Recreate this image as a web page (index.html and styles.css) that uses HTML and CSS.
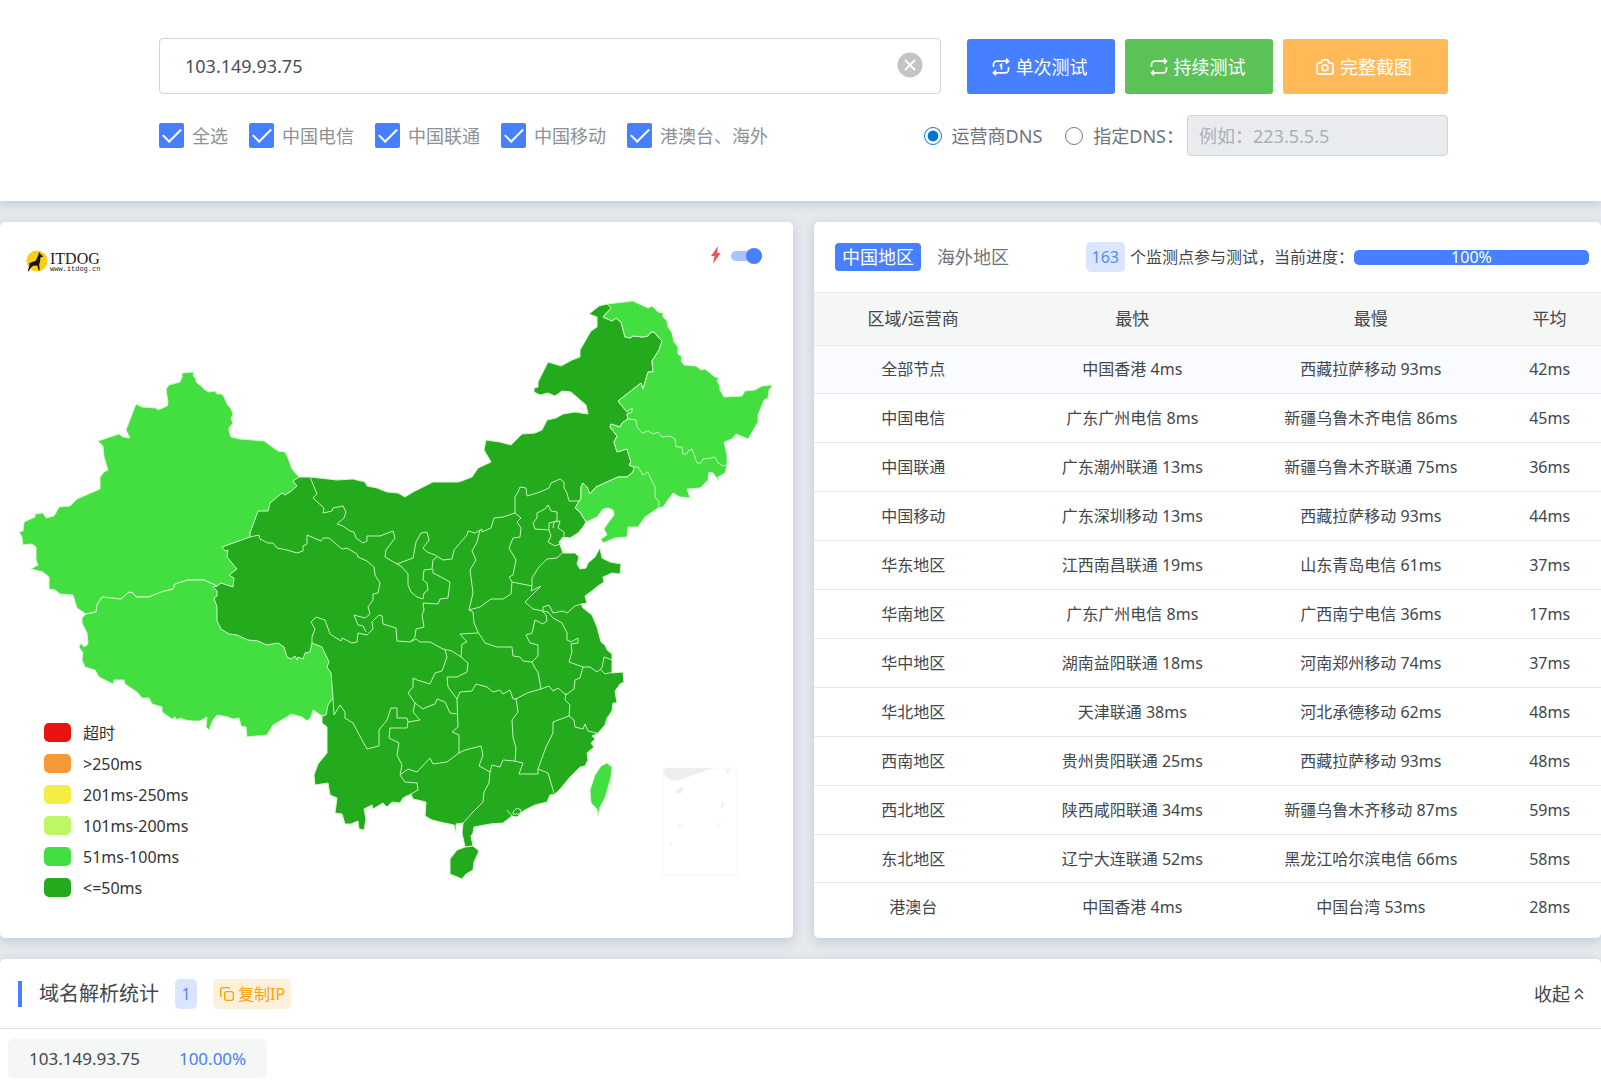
FILE: index.html
```html
<!DOCTYPE html>
<html lang="zh-CN">
<head>
<meta charset="utf-8">
<title>ITDOG</title>
<link rel="stylesheet" href="styles.css">
</head>
<body>
<header class="panel">
  <form>
    <div class="search-row">
      <div class="host-box">
        <input class="host-input" type="text" value="103.149.93.75" aria-label="域名或IP">
        <button class="clear" type="button" aria-label="清空"><svg viewBox="0 0 26 26"><circle cx="13" cy="13" r="12.5" fill="#c4c4c4"/><path d="M8 8l10 10M18 8L8 18" stroke="#fff" stroke-width="1.8"/></svg></button>
      </div>
      <div class="actions">
        <button class="btn btn-blue" type="button"><svg class="icon" viewBox="0 0 24 24"><path d="M3 12V9a4 4 0 0 1 4-4h14M18 2l3 3-3 3M21 12v3a4 4 0 0 1-4 4H3M6 22l-3-3 3-3M10.500 10.500l2-1.500v6"/></svg>单次测试</button>
        <button class="btn btn-green" type="button"><svg class="icon" viewBox="0 0 24 24"><path d="M3 12V9a4 4 0 0 1 4-4h14M18 2l3 3-3 3M21 12v3a4 4 0 0 1-4 4H3M6 22l-3-3 3-3"/></svg>持续测试</button>
        <button class="btn btn-orange" type="button"><svg class="icon" viewBox="0 0 24 24"><path d="M5 7h1a2 2 0 0 0 2-2 1.500 1.500 0 0 1 1.500-1.500h5A1.500 1.500 0 0 1 16 5a2 2 0 0 0 2 2h1a2.500 2.500 0 0 1 2.500 2.500V18a2.500 2.500 0 0 1-2.500 2.500H5A2.500 2.500 0 0 1 2.500 18V9.500A2.500 2.500 0 0 1 5 7z"/><circle cx="12" cy="13" r="3.500"/></svg>完整截图</button>
      </div>
    </div>
    <div class="option-row">
      <div class="lines">
        <label class="tick"><input type="checkbox" checked>全选</label>
        <label class="tick"><input type="checkbox" checked>中国电信</label>
        <label class="tick"><input type="checkbox" checked>中国联通</label>
        <label class="tick"><input type="checkbox" checked>中国移动</label>
        <label class="tick"><input type="checkbox" checked>港澳台、海外</label>
      </div>
      <div class="dns">
        <label class="dns-choice"><input type="radio" name="dns" checked>运营商DNS</label>
        <label class="dns-choice"><input type="radio" name="dns">指定DNS：</label>
        <input class="dns-input" type="text" placeholder="例如：223.5.5.5" aria-label="DNS" disabled>
      </div>
    </div>
  </form>
</header>

<main class="columns">
  <section class="card map-card">
    <svg class="map" viewBox="0 222 793 716" role="img" aria-label="中国地图">
      <g class="land">
        <path class="fast" d="M299 477L310 477 337 480 353 479 365 482 367 486 377 488 387 492 398 493 405 497 413 492 433 482 459 482 472 477 478 468 491 462 484 450 486 440 500 442 511 445 522 434 535 433 542 430 547 420 556 418 563 414 575 412 588 414 586 405 579 399 571 392 562 391 555 396 548 393 540 395 534 392 534 388 538 387 538 382 548 362 561 366 572 360 580 357 580 350 591 331 597 327 597 317 589 314 599 306 607 304 611 308 603 317 612 321 616 318 621 322 625 337 630 338 633 336 643 337 648 336 651 332 654 332 662 341 659 350 652 361 653 372 648 372 643 389 641 383 618 401 627 412 632 408 632 412 627 414 628 419 622 423 620 427 611 424 610 427 617 436 614 442 617 452 627 449 631 462 629 465 634 467 633 472 627 477 618 477 607 482 596 487 590 494 587 487 583 483 581 487 581 498 575 508 580 512 583 517 586 522 583 527 578 533 570 538 563 537 559 542 563 553 575 553 579 557 577 564 580 569 586 568 588 563 595 557 600 548 602 558 610 562 621 564 620 574 612 573 603 577 604 582 598 586 593 590 585 596 587 603 581 604 583 608 592 615 597 627 601 642 605 645 607 650 612 654 612 673 623 672 624 682 620 684 615 691 617 703 613 703 612 711 607 718 605 725 598 733 592 736 595 739 591 743 594 747 587 753 588 760 585 766 580 767 570 777 561 788 555 794 550 795 547 802 535 805 523 811 517 817 512 816 503 823 490 824 474 827 473 833 471 836 473 846 465 847 462 833 463 823 456 824 456 833 454 825 440 822 432 820 425 816 426 802 413 799 411 794 403 798 400 803 392 802 387 807 383 803 373 809 372 805 364 809 366 819 364 830 359 829 358 821 351 824 345 824 342 814 335 813 337 798 330 795 328 783 315 785 314 775 318 764 327 753 327 727 322 723 322 715 310 695 270 685 205 645 198 595 215 565 205 545 235 530 245 500 280 480z"/>
        <path class="good" d="M182 373L194 372 193 376 196 379 196 382 201 386 205 390 209 392 215 391 217 394 222 394 224 397 227 404 231 409 233 414 231 419 233 423 229 428 229 431 231 437 240 439 264 441 278 451 285 452 288 458 292 469 299 477 293 481 297 486 290 492 285 495 282 493 270 503 268 511 258 511 250 533 250 537 222 547 225 551 228 550 227 557 237 569 229 575 234 578 233 587 221 583 217 586 204 580 188 580 175 584 173 589 161 592 149 597 136 597 133 593 129 592 121 599 102 597 97 605 96 612 86 614 77 608 73 595 60 594 55 590 49 589 49 577 43 572 31 569 38 565 36 560 36 547 32 544 23 545 22 537 19 532 23 531 24 522 35 517 35 514 43 513 46 518 54 516 59 507 70 506 77 499 100 489 100 477 104 472 108 470 104 457 103 446 98 441 119 434 123 437 130 438 126 430 136 404 142 407 156 408 158 410 167 406 168 403 166 389 169 385 180 382 182 377z"/>
        <path class="good" d="M86 614L96 612 97 605 102 597 121 599 129 592 133 593 136 597 149 597 161 592 173 589 175 584 188 580 204 580 217 586 213 587 217 591 217 596 214 598 217 607 217 621 221 629 229 634 237 635 248 640 258 641 267 645 278 643 284 647 287 657 291 659 295 656 297 660 298 657 303 659 305 653 310 652 312 643 322 647 329 662 327 667 331 673 333 698 328 705 326 715 322 716 313 710 311 717 307 721 302 717 291 714 287 717 273 725 267 735 247 737 246 727 241 726 239 718 233 719 228 717 217 715 213 720 209 730 206 727 207 717 200 721 193 721 185 720 180 718 177 720 175 717 172 719 162 712 162 707 152 704 149 698 142 698 137 692 125 684 124 680 114 680 113 684 99 677 95 670 85 667 82 660 83 653 79 647 81 643 84 647 88 644 87 633 82 623 82 618z"/>
        <path class="good" d="M607 304L633 301 648 308 652 306 658 312 663 313 663 317 667 321 668 327 672 333 674 342 678 347 678 354 682 357 681 361 684 365 696 366 701 370 705 369 715 377 719 378 717 380 720 387 720 390 724 397 742 396 745 391 755 390 762 386 773 385 769 390 768 398 764 400 758 415 758 422 748 439 736 434 732 439 724 442 727 455 727 465 725 473 718 477 719 481 713 473 709 472 708 480 700 488 687 489 690 498 680 497 673 493 663 507 658 508 645 517 638 527 628 527 627 537 615 538 603 543 601 539 607 535 604 529 608 523 614 515 613 510 608 508 603 509 597 517 586 522 583 517 580 512 575 508 581 498 581 487 583 483 587 487 590 494 596 487 607 482 618 477 627 477 633 472 634 467 629 465 631 462 627 449 617 452 614 442 617 436 610 427 611 424 620 427 622 423 628 419 627 414 632 412 632 408 627 412 618 401 641 383 643 389 648 372 653 372 652 361 659 350 662 341 654 332 651 332 648 336 643 337 633 336 630 338 625 337 621 322 616 318 612 321 603 317 611 308z"/>
        <path class="fast" d="M473 846L479 851 474 862 473 870 466 874 462 879 450 874 450 859 457 850 465 847z"/>
        <path class="good" d="M607 763L612 767 611 777 605 798 600 807 598 816 597 809 591 803 590 790 595 775 601 766z"/>
      </g>
      <g class="borders">
        <path d="M628 419L636 420 637 427 642 433 648 431 653 434 658 432 662 437 670 436 675 439 676 447 682 447 683 454 687 454 688 451 692 449 697 463 701 463 703 459 711 458 715 457 718 463 723 466 727 465"/>
        <path d="M634 467L638 467 643 475 648 472 650 477 655 487 655 497 659 502 659 508"/>
        <path d="M310 477L317 494 313 498 324 508 323 513 332 511 333 508 343 506 346 512 344 518 337 524 343 526 350 531 354 532 356 538 363 543 367 541 367 536 380 536 393 531 395 538 386 550 385 557 397 564 413 558 416 542 421 533 427 532 429 540 423 548 427 552 435 555 443 560 452 559 454 550 467 535 468 531 475 533 482 529 482 532 491 528 494 518 503 517 515 513"/>
        <path d="M397 564L402 567 408 574 408 585 411 592 417 597 423 599 424 593 428 590 427 583 423 580 424 570 432 569 433 560 437 557"/>
        <path d="M433 569L433 573 441 577 450 582 448 598 440 599 438 604 423 603 424 610 422 615 424 627 416 629 415 637 410 642 397 641 396 628 383 624 382 616 379 615 372 622 373 629 367 635 358 633 357 642 352 643 342 638 341 641 330 634 325 620 316 617 311 622 315 629 312 637 312 643"/>
        <path d="M250 537L259 535 260 539 268 543 273 543 277 548 287 550 297 553 303 551 303 546 307 544 307 535 321 541 323 538 329 538 342 549 347 548 357 554 358 557 367 561 374 567 375 575 380 583 378 593 373 594 373 600 368 607 370 614 365 618 354 615 358 625 363 626 366 632"/>
        <path d="M515 513L515 497 518 492 520 487 526 488 527 496 540 492 549 488 551 483 560 479 564 482 564 488 567 493 569 501 580 501"/>
        <path d="M515 513L521 518 517 522 521 528 520 537 513 538 509 548 516 560 513 575 509 577 512 582 511 594 503 599 491 599 480 607 469 610"/>
        <path d="M480 530L477 542 472 551 476 560 470 570 473 593 469 610 473 612 474 623 478 632 485 643 497 647 512 647 513 656 520 657 523 661 532 662 538 656 538 645 530 643 526 635 532 633 535 620 543 624 547 621 546 615 542 611"/>
        <path d="M512 582L532 586 531 591 541 586 525 602 533 609 543 611 543 607 549 605 553 613 563 611 567 613 575 606 581 604"/>
        <path d="M532 586L532 578 539 567 547 559 557 558 563 552"/>
        <path d="M548 505L545 509 537 513 537 518 533 523 535 529 549 530 549 523 557 521 557 512 551 511z"/>
        <path d="M553 528L554 522 560 521 558 528 564 532 564 536M549 530L551 536 548 542 555 546 562 543"/>
        <path d="M543 611L548 612 553 618 562 623 567 633 567 640 571 642 578 638 578 643 571 644 572 652 569 662 583 667 590 667 597 672 602 668 604 657 612 660M600 669L605 674 613 672"/>
        <path d="M583 667L580 678 575 680 574 689 566 695 558 688 553 691 549 686 541 689 538 672 535 668 532 662"/>
        <path d="M541 689L527 693 516 699 513 699 510 690 503 694 500 690 493 692 487 687 476 684 472 691 460 692 457 699 448 687 447 677 457 677 467 672 468 663 461 657 462 644 467 642 460 634 478 633"/>
        <path d="M410 642L416 639 420 642 430 642 443 649 452 651 461 657M445 650L447 657 442 671 435 673 430 684 417 680 413 678 413 687 408 693 415 703 423 709 427 707 435 704 437 699 445 702 450 713 457 714"/>
        <path d="M415 703L413 712 420 720 408 722 407 728 390 728 389 738 399 743 397 755 402 765 400 775 408 769 417 772 430 758 433 764 447 762 459 753 459 735 452 732 458 727 457 699"/>
        <path d="M333 698L334 715 340 705 345 712 345 718 353 723 362 740 367 749 379 746 379 730 387 720 391 708 397 708 397 718 407 718 408 722"/>
        <path d="M400 775L405 782 417 783 418 790 411 794"/>
        <path d="M459 753L465 750 473 748 481 746 483 755 479 766 483 768 490 772 489 783 484 792 483 802 473 812 463 823"/>
        <path d="M490 772L492 765 500 767 503 760 514 761 523 763 519 774 538 774 538 769 548 773 554 793"/>
        <path d="M516 698L518 712 512 720 513 737 516 748 515 761"/>
        <path d="M538 769L546 747 553 733 553 722 569 716 570 705 565 700 566 693M569 716L574 720 575 727 583 729 585 724 588 731 597 733"/>
        <path d="M507 810L512 816M513 812L517 808 521 810 520 814 513 814z"/>
      </g>
      <g class="inset">
        <path d="M663 768H737V875H663z" fill="none" stroke="#f4f4f4"/>
        <path d="M665 768H713L677 781 670 780 663 773zM676 791l5-4 3 1-3 5-4 1zM725 769l5 0-2 5zM722 802h2l-1 6h-2zM722 820l-3 6-1-1zM678 825l5-1-4 3zM670 843l2 0 0 5zM706 849l4-5"/>
      </g>
    </svg>
    <div class="logo">
      <svg class="dog" viewBox="0 0 22 22"><circle cx="11" cy="11" r="10.500" fill="#fad011"/><path fill="#17120a" d="M13 2l1.500 2 3 2.500-3 .8-.5 4.200-.8 3 .5 6h-1l-1.400-5-4 .3-2.300 1.700L2.500 21.500l-.7-.2L3.500 15 3 13.500 6 12l3.500-1L12 6z"/></svg>
      <div><div class="logo-name">ITDOG</div><div class="logo-url">www.itdog.cn</div></div>
    </div>
    <label class="boost"><svg viewBox="0 0 10 18"><path d="M7 0L0 10h3.500L2 18 9.500 7H6z" fill="#f05252"/></svg><input type="checkbox" role="switch" checked aria-label="极速模式"></label>
    <ul class="legend">
      <li><i class="swatch timeout"></i>超时</li>
      <li><i class="swatch over250"></i>&gt;250ms</li>
      <li><i class="swatch to250"></i>201ms-250ms</li>
      <li><i class="swatch to200"></i>101ms-200ms</li>
      <li><i class="swatch to100"></i>51ms-100ms</li>
      <li><i class="swatch to50"></i>&lt;=50ms</li>
    </ul>
  </section>

  <section class="card result-card">
    <div class="result-head">
      <button class="tab active" type="button">中国地区</button>
      <button class="tab" type="button">海外地区</button>
      <span class="badge count">163</span>
      <span class="progress-label">个监测点参与测试，当前进度：</span>
      <div class="progress">100%</div>
    </div>
    <table>
      <colgroup><col class="c-area"><col class="c-fast"><col class="c-slow"><col></colgroup>
      <thead><tr><th>区域/运营商</th><th>最快</th><th>最慢</th><th>平均</th></tr></thead>
      <tbody>
        <tr class="total"><td>全部节点</td><td>中国香港 4ms</td><td>西藏拉萨移动 93ms</td><td>42ms</td></tr>
        <tr><td>中国电信</td><td>广东广州电信 8ms</td><td>新疆乌鲁木齐电信 86ms</td><td>45ms</td></tr>
        <tr><td>中国联通</td><td>广东潮州联通 13ms</td><td>新疆乌鲁木齐联通 75ms</td><td>36ms</td></tr>
        <tr><td>中国移动</td><td>广东深圳移动 13ms</td><td>西藏拉萨移动 93ms</td><td>44ms</td></tr>
        <tr><td>华东地区</td><td>江西南昌联通 19ms</td><td>山东青岛电信 61ms</td><td>37ms</td></tr>
        <tr><td>华南地区</td><td>广东广州电信 8ms</td><td>广西南宁电信 36ms</td><td>17ms</td></tr>
        <tr><td>华中地区</td><td>湖南益阳联通 18ms</td><td>河南郑州移动 74ms</td><td>37ms</td></tr>
        <tr><td>华北地区</td><td>天津联通 38ms</td><td>河北承德移动 62ms</td><td>48ms</td></tr>
        <tr><td>西南地区</td><td>贵州贵阳联通 25ms</td><td>西藏拉萨移动 93ms</td><td>48ms</td></tr>
        <tr><td>西北地区</td><td>陕西咸阳联通 34ms</td><td>新疆乌鲁木齐移动 87ms</td><td>59ms</td></tr>
        <tr><td>东北地区</td><td>辽宁大连联通 52ms</td><td>黑龙江哈尔滨电信 66ms</td><td>58ms</td></tr>
        <tr><td>港澳台</td><td>中国香港 4ms</td><td>中国台湾 53ms</td><td>28ms</td></tr>
      </tbody>
    </table>
  </section>
</main>

<section class="card stats">
  <div class="stats-head">
    <h2>域名解析统计</h2>
    <span class="badge">1</span>
    <button class="copy" type="button"><svg viewBox="0 0 24 24"><rect x="8.500" y="8.500" width="13" height="13" rx="3"/><path d="M4.500 15.500A2 2 0 0 1 2.500 13.500V5a2.500 2.500 0 0 1 2.500-2.500h8.500a2 2 0 0 1 2 2"/></svg>复制IP</button>
    <button class="fold" type="button">收起<svg viewBox="0 0 12 14"><path d="M2 6l4-4 4 4M2 12l4-4 4 4"/></svg></button>
  </div>
  <div class="stats-body">
    <div class="ip-item"><span>103.149.93.75</span><span class="share">100.00%</span></div>
  </div>
</section>
</body>
</html>
```
FILE: styles.css
```css
* { box-sizing: border-box; }

body {
  margin: 0;
  min-height: 100vh;
  display: flex;
  flex-direction: column;
  background: #e6e9ee;
  color: #42474c;
  font: 16px/24px "Noto Sans", "Noto Sans CJK SC", sans-serif;
}

button, input { font: inherit; color: inherit; }
button { border: 0; padding: 0; background: none; cursor: pointer; }

/* Test form */
.panel {
  padding: 38px 153px 45px 159px;
  background: #fff;
  box-shadow: 0 2px 10px rgba(60, 90, 100, .25);
}
.search-row { display: flex; gap: 26px; }
.host-box { position: relative; flex: 1; }
.host-input {
  display: block;
  width: 100%;
  height: 56px;
  padding: 0 60px 0 25px;
  border: 1px solid #ced4da;
  border-radius: 4px;
  font-size: 18px;
  color: #495057;
}
.clear { position: absolute; right: 18px; top: 14px; width: 26px; height: 26px; }
.clear svg { display: block; }

.actions { display: flex; gap: 10px; }
.btn {
  display: flex;
  align-items: center;
  justify-content: center;
  gap: 5px;
  width: 148px;
  height: 55px;
  margin-top: 1px;
  padding-right: 4px;
  border-radius: 3px;
  color: #fff;
  font-size: 18px;
}
.btn-blue { background: #467fff; }
.btn-green { background: #5ac256; }
.btn-orange { width: 165px; background: #ffba57; }
.icon { width: 20px; height: 20px; fill: none; stroke: currentColor; stroke-width: 2; }

.option-row {
  display: flex;
  justify-content: space-between;
  align-items: center;
  margin-top: 21px;
  font-size: 18px;
  color: #8c9196;
}
.lines, .dns { display: flex; align-items: center; }
.lines { gap: 21px; }
.tick { display: flex; align-items: center; gap: 8px; }
.tick input {
  appearance: none;
  width: 25px;
  height: 25px;
  margin: 0;
  border-radius: 2px;
  background: #467fff;
  display: grid;
  place-items: center;
}
.tick input::before {
  content: "";
  width: 16px;
  height: 8px;
  margin-top: -5px;
  border: solid #fff;
  border-width: 0 0 2px 2px;
  transform: rotate(-45deg);
}
.dns { color: #6c757d; }
.dns-choice { display: flex; align-items: center; gap: 10px; }
.dns-choice + .dns-choice { margin-left: 23px; }
.dns-choice input { width: 18px; height: 18px; margin: 0; accent-color: #0075d0; }
.dns-input {
  width: 261px;
  height: 41px;
  margin-left: 3px;
  padding: 0 11px;
  border: 1px solid #ced4da;
  border-radius: 4px;
  background: #e9ebee;
}
.dns-input::placeholder { color: #aab0b6; opacity: 1; }

/* Cards */
.card { background: #fff; border-radius: 5px; box-shadow: 0 3px 12px rgba(60, 90, 100, .22); }
.columns {
  display: grid;
  grid-template-columns: 793fr 787fr;
  gap: 21px;
  margin: 21px 0;
}

/* Map */
.map-card { display: grid; }
.map-card > * { grid-area: 1 / 1; }
.map { display: block; width: 100%; }
.land { stroke: #d4f7cd; stroke-width: 1; stroke-linejoin: round; }
.fast { fill: #24ab1d; }
.good { fill: #43df41; }
.borders { fill: none; stroke: #c4f0bd; stroke-width: 1; stroke-linejoin: round; }
.inset { fill: #eee; }
.logo {
  align-self: start;
  justify-self: start;
  display: flex;
  gap: 2px;
  margin: 28px 0 0 26px;
  color: #26221c;
}
.dog { width: 22px; height: 22px; }
.logo-name { font: 16px/17px "Liberation Serif", serif; }
.logo-url { font: 7px/5px "Liberation Mono", monospace; }
.boost {
  align-self: start;
  justify-self: end;
  display: flex;
  align-items: center;
  gap: 10px;
  margin: 24px 31px 0 0;
}
.boost svg { width: 10px; height: 18px; }
.boost input {
  appearance: none;
  display: flex;
  align-items: center;
  justify-content: flex-end;
  width: 31px;
  height: 10px;
  margin: 2px 0 0;
  border-radius: 5px;
  background: #a9c3fd;
}
.boost input::before {
  content: "";
  flex: none;
  width: 16px;
  height: 16px;
  border-radius: 50%;
  background: #467fff;
}
.legend {
  align-self: end;
  justify-self: start;
  margin: 0 0 35px 44px;
  padding: 0;
  list-style: none;
  color: #333;
}
.legend li { display: flex; align-items: center; gap: 12px; height: 31px; }
.swatch { width: 27px; height: 19px; border-radius: 5px; }
.timeout { background: #e81410; }
.over250 { background: #f79a36; }
.to250 { background: #f5ed43; }
.to200 { background: #bff663; }
.to100 { background: #43df41; }
.to50 { background: #24ab1d; }

/* Results */
.result-head {
  display: flex;
  align-items: center;
  height: 71px;
  padding: 0 12px 0 21px;
  border-bottom: 1px solid #e6e9eb;
}
.tab {
  flex: none;
  height: 28px;
  padding: 0 7px;
  border-radius: 4px;
  font-size: 18px;
  line-height: 28px;
  color: #6c757d;
}
.tab + .tab { margin-left: 9px; }
.tab.active { background: #467fff; color: #fff; }
.badge {
  flex: none;
  height: 30px;
  padding: 0 6px;
  border-radius: 5px;
  background: #dae5ff;
  color: #5b8af5;
  line-height: 30px;
}
.count { margin-left: auto; }
.progress-label { flex: none; margin-left: 5px; }
.progress {
  flex: 0 1 235px;
  height: 15px;
  border-radius: 5px;
  background: #467fff;
  color: #fff;
  line-height: 15px;
  text-align: center;
}
table {
  width: 100%;
  height: 638px;
  border-collapse: collapse;
  table-layout: fixed;
  text-align: center;
}
.c-area { width: 25.2%; }
.c-fast { width: 30.5%; }
.c-slow { width: 30.1%; }
th {
  height: 52px;
  padding: 0;
  border-bottom: 1px solid #e6e9eb;
  background: #f5f6f6;
  font-size: 17px;
  font-weight: 400;
}
td { padding: 0; border-bottom: 1px solid #e6e9eb; }
th:last-child, td:last-child { padding-left: 9px; }
tr:last-child td { border-bottom: 0; }
.total { background: #f9fbff; }

/* Resolution statistics */
.stats { flex: 1; border-radius: 5px 5px 0 0; }
.stats-head {
  display: flex;
  align-items: center;
  height: 70px;
  padding: 0 16px 0 18px;
  border-bottom: 1px solid #e0e2e4;
}
h2 {
  margin: 0 16px 0 0;
  padding-left: 17px;
  border-left: 4px solid #467fff;
  font-size: 20px;
  line-height: 26px;
  font-weight: 400;
}
.stats .badge { width: 22px; text-align: center; }
.copy {
  display: flex;
  align-items: center;
  gap: 3px;
  height: 30px;
  margin-left: 16px;
  padding: 0 6px;
  border-radius: 5px;
  background: #fff0dc;
  color: #ff9f0a;
}
.copy svg { width: 16px; height: 16px; fill: none; stroke: currentColor; stroke-width: 2; }
.fold { display: flex; align-items: center; gap: 3px; margin-left: auto; font-size: 18px; }
.fold svg { width: 12px; height: 14px; fill: none; stroke: currentColor; stroke-width: 1.5; }
.stats-body { padding: 10px 8px; }
.ip-item {
  display: inline-flex;
  gap: 39px;
  padding: 0 21px;
  border-radius: 5px;
  background: #f5f6f6;
  font-size: 17px;
  line-height: 39px;
}
.share { color: #467fff; }
```
